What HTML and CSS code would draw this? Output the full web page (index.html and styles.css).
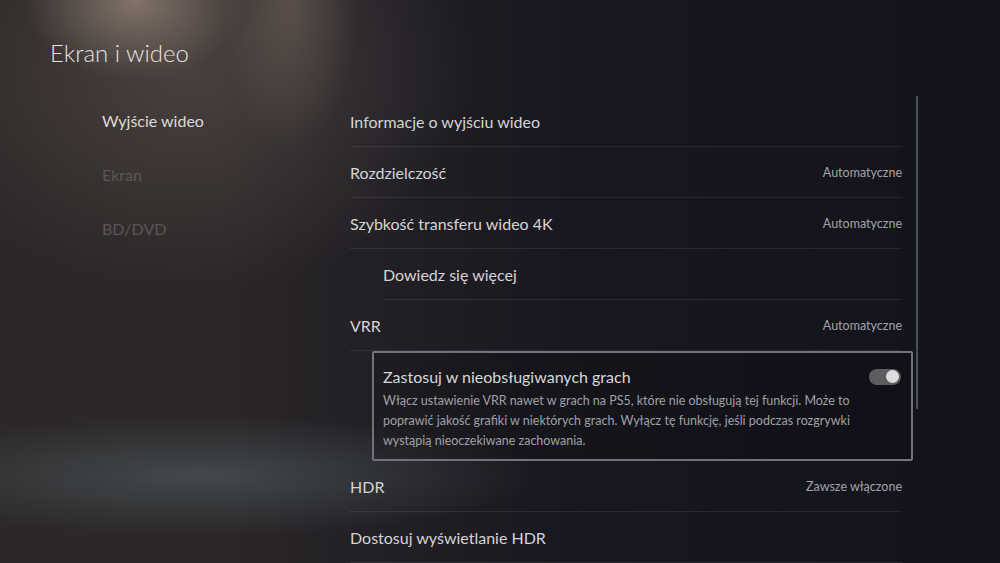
FILE: index.html
```html
<!DOCTYPE html>
<html lang="pl">
<head>
    <meta charset="UTF-8">
    <title>Ekran i wideo</title>
    <link rel="stylesheet" href="styles.css">
</head>
<body>
    <div class="screen">
        <h1 class="title">Ekran i wideo</h1>

        <div class="layout">
            <ul class="nav">
                <li class="nav-item active">Wyjście wideo</li>
                <li class="nav-item">Ekran</li>
                <li class="nav-item">BD/DVD</li>
            </ul>

            <div class="list">
                <div class="row">
                    <span class="label">Informacje o wyjściu wideo</span>
                </div>
                <div class="row">
                    <span class="label">Rozdzielczość</span>
                    <span class="value">Automatyczne</span>
                </div>
                <div class="row">
                    <span class="label">Szybkość transferu wideo 4K</span>
                    <span class="value">Automatyczne</span>
                </div>
                <div class="row sub">
                    <span class="label">Dowiedz się więcej</span>
                </div>
                <div class="row">
                    <span class="label">VRR</span>
                    <span class="value">Automatyczne</span>
                </div>

                <div class="option">
                    <div class="option-head">
                        <span class="option-title">Zastosuj w nieobsługiwanych grach</span>
                        <span class="toggle"><span class="knob"></span></span>
                    </div>
                    <p class="option-desc">Włącz ustawienie VRR nawet w grach na PS5, które nie obsługują tej funkcji. Może to poprawić jakość grafiki w niektórych grach. Wyłącz tę funkcję, jeśli podczas rozgrywki wystąpią nieoczekiwane zachowania.</p>
                </div>

                <div class="row">
                    <span class="label">HDR</span>
                    <span class="value">Zawsze włączone</span>
                </div>
                <div class="row">
                    <span class="label">Dostosuj wyświetlanie HDR</span>
                </div>
            </div>

            <div class="scrollbar"></div>
        </div>
    </div>
</body>
</html>
```

FILE: styles.css
```css
* {
    box-sizing: border-box;
}

html, body {
    margin: 0;
    overflow: hidden;
}

body {
    width: 1000px;
    height: 563px;
    font-family: Lato, "Open Sans", sans-serif;
    color: #d4d4d4;
    background:
        radial-gradient(ellipse 110px 80px at 135px 0px, rgba(175, 155, 140, 0.6), transparent),
        radial-gradient(ellipse 70px 150px at 290px 0px, rgba(150, 130, 115, 0.35), transparent),
        radial-gradient(ellipse 280px 220px at 190px 70px, rgba(110, 95, 88, 0.45), transparent),
        radial-gradient(ellipse 340px 60px at 200px 476px, rgba(85, 100, 105, 0.55), transparent),
        linear-gradient(90deg, #2c2828 0%, #2b2728 22%, #211f25 40%, #17171f 58%, #12131b 100%);
}

.screen {
    padding: 38px 0 0 50px;
}

.title {
    margin: 0;
    font-size: 24px;
    font-weight: 300;
    line-height: 30px;
    color: #e4e2e0;
}

.layout {
    display: flex;
    margin-top: 28px;
}

.nav {
    list-style: none;
    margin: -2px 0 0;
    padding: 0 0 0 52px;
    width: 300px;
}

.nav-item {
    height: 54px;
    line-height: 54px;
    font-size: 16px;
    color: #5c5656;
}

.nav-item.active {
    color: #dcdad8;
}

.list {
    width: 552px;
}

.row {
    display: flex;
    justify-content: space-between;
    align-items: center;
    height: 51px;
    border-bottom: 1px solid rgba(255, 255, 255, 0.08);
}

.row.sub {
    margin-left: 33px;
}

.label {
    font-size: 16px;
    color: #d4d4d4;
}

.value {
    font-size: 12.5px;
    color: #a2a2a8;
}

.option {
    width: 541px;
    height: 110px;
    margin-left: 22px;
    padding: 14px 10px 0 9px;
    border: 2px solid #72727c;
    border-radius: 2px;
    background: rgba(0, 0, 0, 0.12);
}

.option-head {
    display: flex;
    justify-content: space-between;
    align-items: center;
}

.option-title {
    font-size: 16px;
    color: #d8d8d8;
}

.toggle {
    display: flex;
    justify-content: flex-end;
    align-items: center;
    width: 32px;
    height: 16px;
    padding: 0 2px;
    border-radius: 8px;
    background: #5c5c63;
}

.knob {
    width: 13px;
    height: 13px;
    border-radius: 50%;
    background: #dededf;
}

.option-desc {
    margin: 5px 0 0;
    width: 500px;
    font-size: 12.5px;
    line-height: 20px;
    color: #a0a0a6;
}

.scrollbar {
    width: 2px;
    height: 313px;
    margin-left: 14px;
    background: #4e5059;
}
```
